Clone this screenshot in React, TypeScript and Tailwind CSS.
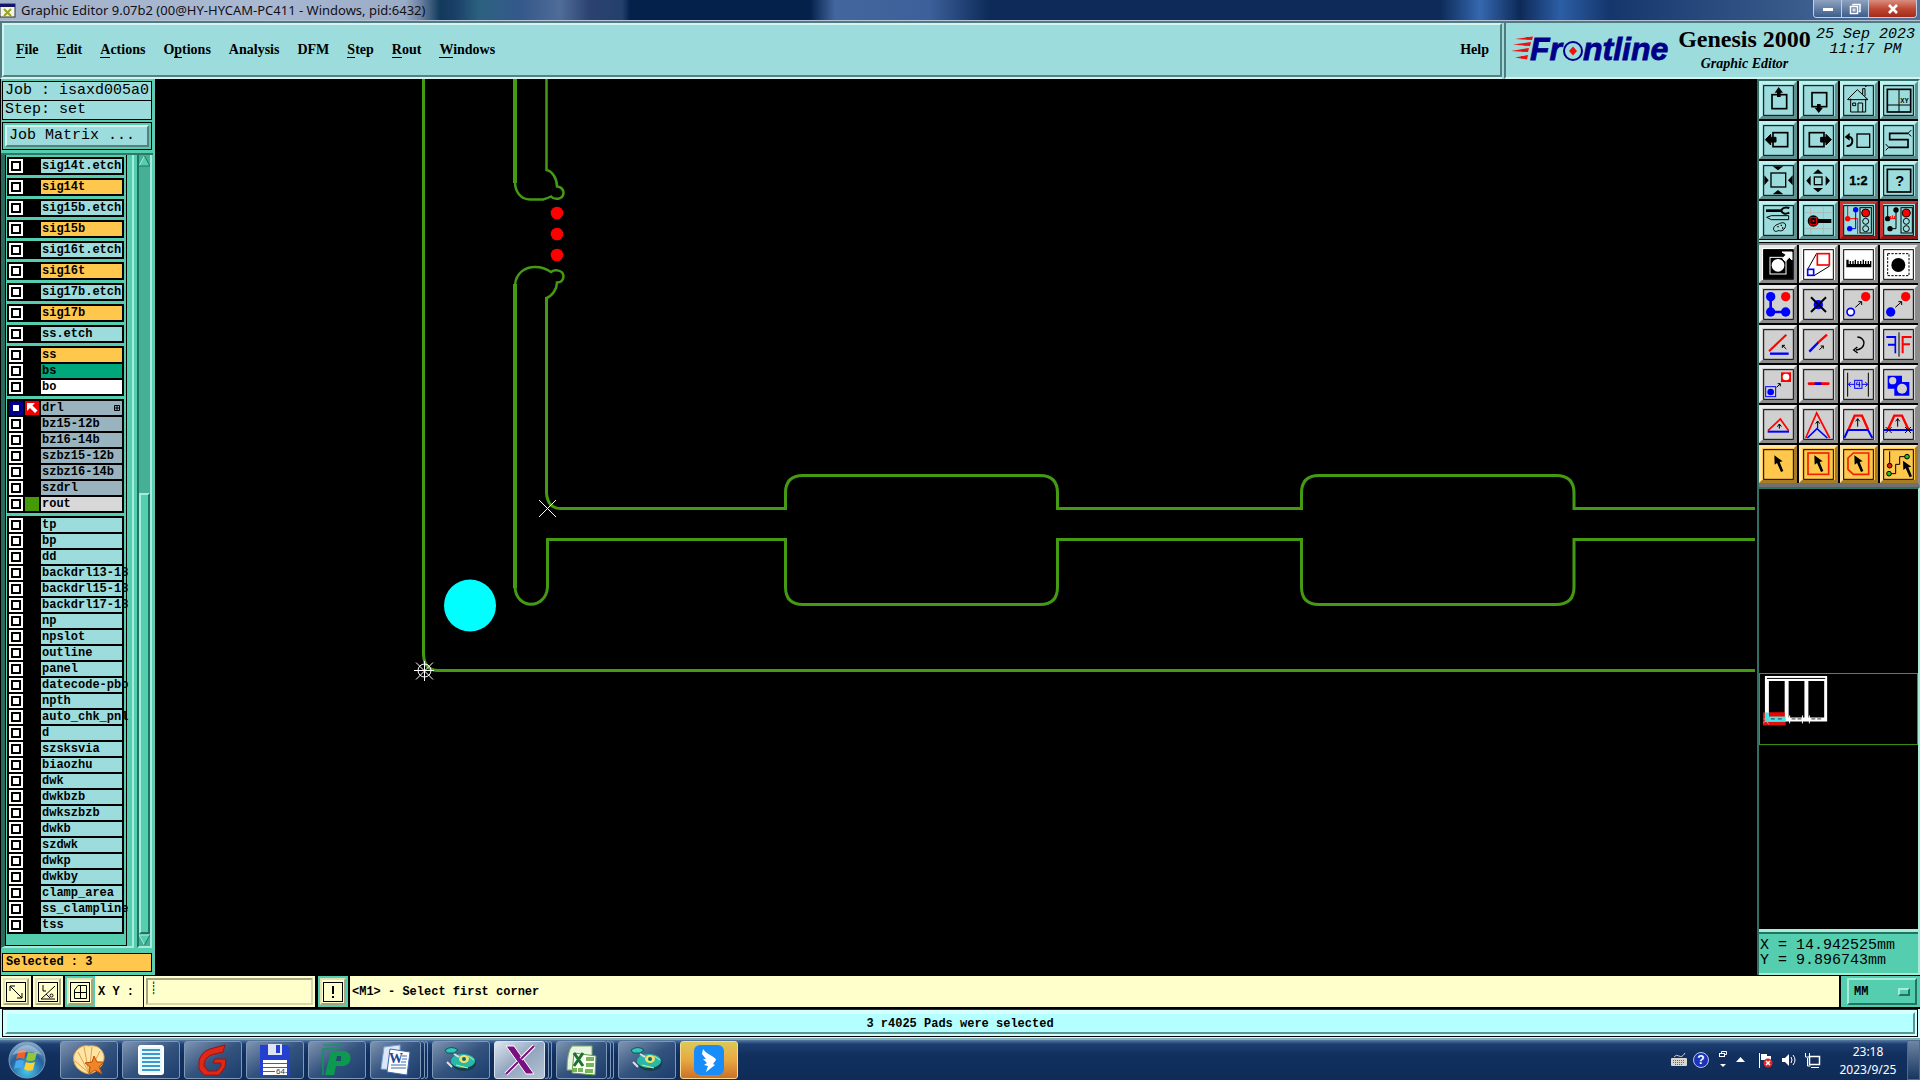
import React, { ReactNode } from "react";

const mono = "font-['Liberation_Mono',monospace] font-bold";
const serif = "font-['Liberation_Serif',serif] font-bold";
const raised = "border-2 border-t-[#d5f3f0] border-l-[#d5f3f0] border-r-[#568180] border-b-[#568180]";

/* ---------- Title bar ---------- */

function TitleBar() {
  return (
    <header className="flex h-[21px] shrink-0 items-center justify-between border-b border-[#b4c0d4] bg-[linear-gradient(90deg,#a3b2cb_0px,#aab9d2_260px,#9aabc6_405px,#6d83a4_420px,#123a5a_440px,#1a3f68_455px,#2c6280_480px,#34588a_520px,#506c98_560px,#2c4270_590px,#24406c_622px,#04214c_630px,#04214c_810px,#44669e_835px,#3c609a_930px,#0d2a58_990px,#0d2a58_1440px,#3568b0_1480px,#0d2a58_1520px,#2c5ea6_1560px,#14366c_1610px,#3a5c8c_1800px,#51719c_1900px)]">
      <div className="flex items-center gap-[5px]">
        <svg width="16" height="15" viewBox="0 0 16 15">
          <rect x="0" y="1" width="15" height="13" fill="#f4f4ee" stroke="#333" />
          <rect x="0" y="1" width="15" height="3" fill="#15156b" />
          <path d="M4 6l7 7M11 6l-7 7" stroke="#9aa51b" strokeWidth="2" />
        </svg>
        <h1 className="font-['Noto_Sans',sans-serif] text-[13px] leading-[20px] text-[#101018]">
          Graphic Editor 9.07b2 (00@HY-HYCAM-PC411 - Windows, pid:6432)
        </h1>
      </div>
      <div className="mr-[3px] flex h-[18px] self-start overflow-hidden rounded-b-[4px] border border-t-0 border-[#c3cfdf]">
        <button aria-label="Minimize" className="flex w-7 items-center justify-center border-r border-[#c3cfdf] bg-gradient-to-b from-[#8fa3bf] to-[#3d5d8c]">
          <svg width="12" height="12"><rect x="1" y="5" width="10" height="3" fill="#fff" /></svg>
        </button>
        <button aria-label="Restore" className="flex w-[27px] items-center justify-center border-r border-[#c3cfdf] bg-gradient-to-b from-[#8fa3bf] to-[#3d5d8c]">
          <svg width="12" height="12" fill="none" stroke="#fff" strokeWidth="1.5"><path d="M4 2.5V1.500h7v7H9.500" /><rect x="1.500" y="3.500" width="7" height="7" /><rect x="4" y="6" width="2" height="2" strokeWidth="1" /></svg>
        </button>
        <button aria-label="Close" className="flex w-[47px] items-center justify-center bg-gradient-to-b from-[#d88d80] via-[#c04a35] to-[#a42a18]">
          <svg width="12" height="12"><path d="M2 2l8 8M10 2l-8 8" stroke="#fff" strokeWidth="2.600" /></svg>
        </button>
      </div>
    </header>
  );
}

/* ---------- Menu and brand panel ---------- */

const menus: [string, number][] = [
  ["File", 0], ["Edit", 0], ["Actions", 0], ["Options", 1], ["Analysis", -1],
  ["DFM", -1], ["Step", 0], ["Rout", 0], ["Windows", 0],
];

function MenuLabel({ text, mark }: { text: string; mark: number }) {
  if (mark < 0) return <>{text}</>;
  return (
    <>
      {text.slice(0, mark)}
      <span className="border-b border-black">{text[mark]}</span>
      {text.slice(mark + 1)}
    </>
  );
}

function FrontlineLogo() {
  return (
    <svg width="162" height="44" viewBox="0 -8 162 44" aria-label="Frontline" className="overflow-visible">
      <g fill="#f01010">
        <path d="M4 4L22 1.500 21 5z M2 9.500L20 7 19 11z M0 16L18 13 17 17z M4 22.500L17 20 16 24.500z" />
        <rect x="15" y="2" width="6" height="2.500" /><rect x="13" y="8" width="6" height="2.500" />
        <rect x="11" y="14" width="6" height="2.500" /><rect x="10" y="21" width="6" height="2.500" />
      </g>
      <g fill="#000088" stroke="#000088" strokeWidth="0.800" fontFamily="Liberation Sans, sans-serif" fontWeight="bold" fontStyle="italic" fontSize="32">
        <text x="19" y="25">Fr</text>
        <text x="72" y="25">ntline</text>
      </g>
      <circle cx="62" cy="16" r="9" fill="#9cdcdc" stroke="#000088" strokeWidth="2" />
      <path d="M62 11.500l4 4.500-4 4.500-4-4.500z" fill="#f01010" />
    </svg>
  );
}

function TopBar() {
  return (
    <div className="flex h-[58px] shrink-0 border-t-2 border-t-[#4f7c80] bg-[#9cdcdc]">
      <nav className="flex flex-1 items-center justify-between border-b-2 border-[#d5f3f0] border-l-2 border-l-[#4f7c80]">
        <div className={`flex h-full w-full items-center justify-between ${raised} pr-[11px] pl-[12px]`}>
          <div className="flex gap-[18px]">
            {menus.map(([text, mark]) => (
              <button key={text} className={`${serif} text-[14px] leading-[18px] text-black`}>
                <MenuLabel text={text} mark={mark} />
              </button>
            ))}
          </div>
          <button className={`${serif} text-[14px] leading-[18px]`}>Help</button>
        </div>
      </nav>
      <section className="ml-[2px] flex w-[416px] justify-between border-b-2 border-l-2 border-b-[#d5f3f0] border-l-[#4f7c80] pl-[5px] pr-[5px]">
        <div className="pt-[4px]"><FrontlineLogo /></div>
        <div className={`${serif} flex flex-col items-center`}>
          <span className="text-[24px] leading-[32px] whitespace-nowrap">Genesis 2000</span>
          <span className="text-[14px] leading-[18px] italic">Graphic Editor</span>
        </div>
        <div className={`${mono} flex flex-col items-center pt-[4px] text-[15px] leading-[15px] font-normal whitespace-nowrap italic`}>
          <span>25 Sep 2023</span>
          <span>11:17 PM</span>
        </div>
      </section>
    </div>
  );
}

/* ---------- Layer list ---------- */

type Layer = { name: string; tone: string; kind?: "active" | "green" };
const cyan = "bg-[#9cdcdc]";
const amber = "bg-[#ffc84d]";
const slate = "bg-[#9ab4bf]";

const layerGroups: Layer[][] = [
  [{ name: "sig14t.etch", tone: cyan }],
  [{ name: "sig14t", tone: amber }],
  [{ name: "sig15b.etch", tone: cyan }],
  [{ name: "sig15b", tone: amber }],
  [{ name: "sig16t.etch", tone: cyan }],
  [{ name: "sig16t", tone: amber }],
  [{ name: "sig17b.etch", tone: cyan }],
  [{ name: "sig17b", tone: amber }],
  [{ name: "ss.etch", tone: cyan }],
  [
    { name: "ss", tone: amber },
    { name: "bs", tone: "bg-[#00a67c]" },
    { name: "bo", tone: "bg-white" },
  ],
  [
    { name: "drl", tone: slate, kind: "active" },
    { name: "bz15-12b", tone: slate },
    { name: "bz16-14b", tone: slate },
    { name: "szbz15-12b", tone: slate },
    { name: "szbz16-14b", tone: slate },
    { name: "szdrl", tone: slate },
    { name: "rout", tone: "bg-[#d8d8d8]", kind: "green" },
  ],
  [
    "tp", "bp", "dd", "backdrl13-18", "backdrl15-18", "backdrl17-18", "np", "npslot", "outline",
    "panel", "datecode-pbo", "npth", "auto_chk_pnl", "d", "szsksvia", "biaozhu", "dwk", "dwkbzb",
    "dwkszbzb", "dwkb", "szdwk", "dwkp", "dwkby", "clamp_area", "ss_clampline", "tss",
  ].map((name) => ({ name, tone: cyan })),
];

function LayerRow({ layer }: { layer: Layer }) {
  const active = layer.kind === "active";
  return (
    <li className="flex h-[14px] gap-[2px]">
      <label className="contents">
        <input
          type="checkbox"
          className={
            active
              ? "h-[14px] w-[14px] shrink-0 appearance-none border-[3px] border-[#00008c] bg-white outline-2 -outline-offset-4 outline-[#00008c]"
              : "h-[14px] w-[14px] shrink-0 appearance-none bg-white outline-2 -outline-offset-4 outline-black"
          }
        />
        <span className={`h-[14px] w-[14px] shrink-0 ${active ? "bg-[#f00000]" : layer.kind === "green" ? "bg-[#459a08]" : "bg-black"}`}>
          {active && (
            <svg width="14" height="14"><path d="M2 2h8l-2.500 2.500 5 5-2.500 2.500-5-5L2 10z" fill="#fff" /></svg>
          )}
        </span>
        <span className={`flex h-[14px] w-[81px] items-center justify-between ${layer.tone} pl-[1px]`}>
          <span className={`${mono} shrink-0 text-[12px] leading-[14px] whitespace-pre`}>{layer.name}</span>
          {active && (
            <svg className="mr-[2px] shrink-0" width="6" height="6" fill="none" stroke="#000"><path d="M.5.5h5v5h-5zM3 0v6M0 3h6" /></svg>
          )}
        </span>
      </label>
    </li>
  );
}

function Sidebar() {
  return (
    <aside className="flex w-[155px] shrink-0 flex-col border-r-2 border-l border-r-[#6fc4b4] border-l-black bg-[#55ceb0] pt-[2px]">
      <dl className={`${mono} mx-[1px] border border-black bg-[#9cdcdc] text-[15px] leading-[18px] font-normal`}>
        <div className="border-b border-black pl-[2px] whitespace-pre">Job : isaxd005a0</div>
        <div className="pl-[2px] whitespace-pre">Step: set</div>
      </dl>
      <div className="mx-[1px] mt-[2px] border border-black p-[2px]">
        <button className={`${mono} block w-full ${raised} bg-[#9cdcdc] pl-[2px] text-left text-[15px] leading-[18px] font-normal`}>Job Matrix ...</button>
      </div>
      <div className="mt-[3px] flex flex-1 justify-between border-t-2 border-[#2f7768] pr-[1px]">
        <div className="flex w-[133px] border-r-2 border-b-2 border-l-4 border-[#a6ecd9] border-l-[#2b6b5e]">
          <div className="flex w-[122px] flex-col border-x border-b border-black pt-[2px] pl-[1px]">
            {layerGroups.map((group, i) => (
              <ul key={i} className="mb-[3px] flex w-[117px] flex-col gap-[2px] bg-black p-[2px]">
                {group.map((layer) => (
                  <LayerRow key={layer.name} layer={layer} />
                ))}
              </ul>
            ))}
          </div>
        </div>
        <div className="flex w-[15px] flex-col border-2 border-t-0 border-r-[#a6ecd9] border-b-[#a6ecd9] border-l-[#217362] bg-[#45b096]">
          <svg width="11" height="12"><path d="M5.500 1L11 11H0z" fill="#55ceb0" /><path d="M5.500 1L0 11" stroke="#a6ecd9" /><path d="M5.500 1L11 11H0" fill="none" stroke="#217362" /></svg>
          <div className="flex-[326]" />
          <div className="flex-[436] border-t-2 border-r-2 border-b-2 border-l-2 border-[#a6ecd9] border-r-[#217362] border-b-[#217362] bg-[#55ceb0]" />
          <svg width="11" height="12"><path d="M0 1H11L5.500 11z" fill="#55ceb0" /><path d="M11 1H0L5.500 11" fill="none" stroke="#a6ecd9" /><path d="M5.500 11L11 1" stroke="#217362" /></svg>
        </div>
      </div>
      <div className={`${mono} mx-[1px] mt-[5px] mb-[3px] border border-black bg-[#ffc84d] pl-[3px] text-[12px] leading-[17px] whitespace-pre`}>Selected : 3</div>
    </aside>
  );
}

/* ---------- Board canvas ---------- */

function Canvas() {
  return (
    <main className="min-w-0 flex-1 bg-black pr-[2px]">
      <svg className="block h-full w-full" viewBox="155 79 1600 896" preserveAspectRatio="xMinYMin slice">
        <g fill="none" stroke="#459a14" strokeWidth="3">
          <path d="M423.500 79V654Q424 670.500 438 670.500H1757" />
          <path d="M515 79V183" strokeWidth="4" />
          <path d="M515 182C515 192 521 199.500 530 199.500H543Q548 198 551 196.500C554 200 563 200 563.500 193C563.500 189 561 187 557 186.500C557 178 552 171 546.500 170V79" strokeWidth="2.500" />
          <path d="M515 284V588" strokeWidth="4" />
          <path d="M515 285C516 272 526 267 535 267Q544 267 551 272C555 269 563 270 563.500 276C563.500 280 561 282.500 557 282.500C557 289 552 296 546.500 298" strokeWidth="2.500" />
          <path d="M546.500 297V493Q547.500 508.500 561 508.500H785.500V493Q785.500 475.500 803 475.500H1040Q1057.500 475.500 1057.500 493V508.500H1301.500V493Q1301.500 475.500 1319 475.500H1556Q1574 475.500 1574 493V508.500H1757" />
          <path d="M515 587C516 610 546 610 547.500 587V539.500H785.500V587Q785.500 604.500 803 604.500H1040Q1057.500 604.500 1057.500 587V539.500H1301.500V587Q1301.500 604.500 1319 604.500H1556Q1574 604.500 1574 587V539.500H1757" />
        </g>
        <g fill="#ff0000">
          <circle cx="557" cy="213" r="6.300" /><circle cx="557" cy="234" r="6.300" /><circle cx="557" cy="255" r="6.300" />
        </g>
        <circle cx="470" cy="605.500" r="26" fill="#00ffff" />
        <g fill="none" stroke="#fff">
          <path d="M539 500l17 17M556 500l-17 17" />
          <path d="M416 662.500l17 17M433 662.500l-17 17M414 670.500h20M424.500 661v20" />
          <circle cx="424.500" cy="670.500" r="6.500" />
        </g>
      </svg>
    </main>
  );
}

/* ---------- Tool palette ---------- */

type Tool = { label: string; art: ReactNode };

const cursor = (dx: number) => (
  <path transform={`translate(${dx} 0)`} d="M33 18L34 46 41 41 53 68 60 65 49 38 58 36z" fill="#000" stroke="none" />
);
const upArrow = (x: number, top: number, bottom: number) => (
  <path d={`M${x} ${bottom}V${top}M${x - 6} ${top + 8}L${x} ${top}L${x + 6} ${top + 8}`} strokeWidth="3" />
);
const diagArrow = <path d="M36 54L54 38M45 37H55V47" strokeWidth="3" />;

const navTools: Tool[] = [
  { label: "Pan up", art: <><rect x="26" y="28" width="44" height="42" strokeWidth="5" /><path d="M46 5L59 22H52V35H41V22H34z" fill="#000" stroke="none" /></> },
  { label: "Pan down", art: <><rect x="26" y="22" width="44" height="42" strokeWidth="5" /><path d="M46 83L59 67H52V56H41V67H34z" fill="#000" stroke="none" /></> },
  { label: "Home", art: <><path d="M12 43L42 13 74 43M22 40V80H67V40M14 43H74M58 26V10H65V32" /><path d="M28 53h9v8h-9zM44 80V53H58V80" /><path d="M65 4l6-3" /></> },
  { label: "Coordinates", art: <><rect x="12" y="12" width="70" height="68" strokeWidth="5" /><path d="M47 12V80M12 59H82" /><text x="51" y="54" fontSize="19" fill="#000" stroke="none">XY</text></> },
  { label: "Pan left", art: <><rect x="29" y="22" width="44" height="42" strokeWidth="5" /><path d="M6 43L22 27V36H38V50H22V59z" fill="#000" stroke="#000" /></> },
  { label: "Pan right", art: <><rect x="18" y="22" width="44" height="42" strokeWidth="5" /><path d="M84 43L68 27V36H52V50H68V59z" fill="#000" stroke="#000" /></> },
  { label: "Previous view", art: <><rect x="41" y="26" width="38" height="40" strokeWidth="4" /><path d="M10 62C32 64 32 32 14 34" strokeWidth="6" /><path d="M4 35L19 22V46z" fill="#000" stroke="none" /></> },
  { label: "Snake", art: <><path d="M74 24H19V43H74V66H16" strokeWidth="5" /><path d="M74 24L84 14M74 24L84 33M16 66L7 56M16 66L7 75" /></> },
  { label: "Zoom in", art: <><rect x="23" y="23" width="44" height="42" strokeWidth="4" /><path d="M28 3H60L44 15zM28 87H60L44 74zM3 30V60L16 45zM88 30V60L74 45z" fill="#000" stroke="none" /></> },
  { label: "Zoom out", art: <><rect x="33" y="35" width="23" height="23" strokeWidth="4" /><path d="M29 25H59L44 12zM29 68H59L44 81zM22 31V61L9 46zM67 31V61L80 46z" fill="#000" stroke="none" /></> },
  { label: "Scale", art: <text x="45" y="59" fontSize="38" textAnchor="middle" fill="#000" stroke="#000" strokeWidth="1">1:2</text> },
  { label: "Help", art: <><rect x="12" y="12" width="70" height="68" strokeWidth="5" /><text x="49" y="62" fontSize="44" textAnchor="middle" fill="#000" stroke="none">?</text></> },
  { label: "Setup", art: <><path d="M8 16H54" strokeWidth="8" /><path d="M78 8C66 4 56 8 54 16C56 24 66 28 78 22" strokeWidth="6" /><path d="M10 36L24 31H76V43H24z" strokeWidth="3" /><path d="M46 56C30 60 26 74 36 78C42 80 42 74 48 76C58 80 70 66 66 56C62 50 52 52 46 56z" strokeWidth="3" /><path d="M42 64h4M52 60h4M56 68h4" strokeWidth="4" /></> },
  { label: "Highlight", art: <><path d="M6 22H84M6 70H84M22 6V84M60 6V84" stroke="#b0b8b8" /><circle cx="30" cy="47" r="17" fill="#000" stroke="none" /><path d="M44 47H84" strokeWidth="12" /><rect x="20" y="37" width="20" height="20" stroke="#f00" strokeWidth="3" /><rect x="27" y="44" width="6" height="6" fill="#f00" stroke="none" /></> },
  { label: "Netlist", art: <><path d="M13 2V40H43V86" stroke="#f00" /><path d="M37 13V70H19" stroke="#00f" /><circle cx="37" cy="13" r="8" fill="#00f" stroke="none" /><circle cx="19" cy="70" r="8" fill="#00f" stroke="none" /><circle cx="13" cy="40" r="8" fill="#f00" stroke="none" /><rect x="50" y="7" width="34" height="76" /><circle cx="67" cy="23" r="12" fill="#f00" /><circle cx="67" cy="48" r="9" /><circle cx="67" cy="70" r="9" /></> },
  { label: "Checks", art: <><path d="M13 2V40M38 14V70H20" /><circle cx="38" cy="14" r="8" fill="#000" stroke="none" /><circle cx="13" cy="40" r="8" fill="#000" stroke="none" /><circle cx="20" cy="70" r="8" fill="#000" stroke="none" /><path d="M18 40H38M22 32V40M28 30V40M34 32V40" stroke="#f00" /><rect x="53" y="7" width="34" height="76" /><circle cx="69" cy="23" r="12" fill="#f00" /><circle cx="69" cy="48" r="9" /><circle cx="69" cy="70" r="9" /></> },
];

const editTools: Tool[] = [
  { label: "Reference", art: <><rect x="2" y="2" width="86" height="86" fill="#000" /><rect x="20" y="24" width="48" height="50" stroke="#fff" /><circle cx="44" cy="48" r="19" fill="#fff" stroke="none" /><path d="M56 8H86V32L78 24 66 36 58 28 68 16z" stroke="#fff" fill="#fff" /></> },
  { label: "Area zoom", art: <><path d="M14 58L40 12M32 79L79 50" /><rect x="42" y="13" width="36" height="34" stroke="#f00" strokeWidth="5" fill="#fff" /><rect x="13" y="60" width="18" height="18" stroke="#00f" strokeWidth="5" fill="#fff" /></> },
  { label: "Measure", art: <path d="M9 54H84V35H80V44H77V35H73V44H69V35H65V44H62V31H58V44H54V35H50V44H46V35H42V44H38V31H34V44H31V35H27V44H23V35H19V44H16V31H9z" fill="#000" stroke="none" /> },
  { label: "Pad select", art: <><rect x="13" y="13" width="64" height="66" strokeDasharray="7 4" /><circle cx="45" cy="47" r="21" fill="#000" stroke="none" /></> },
  { label: "Connect", art: <><path d="M22 22V68H67" stroke="#00f" strokeWidth="8" /><g fill="#00f" stroke="none"><circle cx="22" cy="22" r="14" /><circle cx="22" cy="68" r="14" /><circle cx="67" cy="68" r="14" /></g><circle cx="67" cy="22" r="14" fill="#f00" stroke="none" /></> },
  { label: "Delete", art: <><circle cx="45" cy="46" r="14" fill="#00f" stroke="none" /><path d="M23 24L68 68M68 24L23 68" strokeWidth="6" /></> },
  { label: "Copy", art: <><circle cx="22" cy="68" r="11" stroke="#00f" strokeWidth="5" fill="#fff" /><circle cx="67" cy="22" r="14" fill="#f00" stroke="none" />{diagArrow}</> },
  { label: "Move", art: <><circle cx="22" cy="68" r="14" fill="#00f" stroke="none" /><circle cx="67" cy="22" r="14" fill="#f00" stroke="none" />{diagArrow}</> },
  { label: "Rotate line", art: <><path d="M17 66L69 16" stroke="#f00" strokeWidth="6" /><path d="M20 73H76" stroke="#00f" strokeWidth="7" /><path d="M69 59L57 48M57 56V48H65" /></> },
  { label: "Extend line", art: <><path d="M18 67L46 38" stroke="#00f" strokeWidth="7" /><path d="M44 40L71 16" stroke="#f00" strokeWidth="7" /><path d="M48 61L60 50M52 50H60V58" /></> },
  { label: "Rotate", art: <><path d="M42 23C68 24 70 58 38 62" strokeWidth="4" /><path d="M42 53L31 62 43 71" strokeWidth="4" /></> },
  { label: "Mirror", art: <><path d="M9 23H38M14 46H38" stroke="#00f" strokeWidth="6" /><path d="M36 20V72" stroke="#00f" strokeWidth="5" /><path d="M47 9V82" /><path d="M58 72V23H85M58 45H80" stroke="#f00" strokeWidth="6" /></> },
  { label: "Resize", art: <><rect x="53" y="9" width="30" height="29" fill="#f00" stroke="none" /><circle cx="68" cy="23" r="10" fill="#fff" stroke="none" /><rect x="7" y="52" width="30" height="30" stroke="#00f" fill="#d0d0d0" /><circle cx="22" cy="68" r="10" fill="#00f" stroke="none" /><path d="M40 54L50 44M43 43H51V51" /></> },
  { label: "Break line", art: <><path d="M17 43H75" stroke="#f00" strokeWidth="8" strokeLinecap="round" /><path d="M34 43H54" stroke="#00f" strokeWidth="8" /></> },
  { label: "Spacing", art: <><path d="M13 10V82M75 10V82" /><path d="M15 45H33M56 45H73M22 38L15 45 22 52M66 38L73 45 66 52" stroke="#00f" /><rect x="34" y="33" width="22" height="24" stroke="#00f" /><path d="M42 37L39 46H51M48 37V53" stroke="#00f" /></> },
  { label: "Merge", art: <><path d="M13 19H56V38H78V79H33V58H13z" fill="#00f" stroke="none" /><circle cx="28" cy="34" r="11" fill="#d0d0d0" stroke="none" /><circle cx="56" cy="58" r="15" fill="#d0d0d0" stroke="none" /></> },
  { label: "Triangle", art: <><path d="M14 64L51 29 76 64" stroke="#f00" strokeWidth="5" /><path d="M13 67H77" stroke="#00f" strokeWidth="6" />{upArrow(48, 44, 58)}</> },
  { label: "Peak", art: <><path d="M7 86L40 11 79 86" stroke="#f00" strokeWidth="5" /><path d="M12 86L41 58 72 86" stroke="#00f" strokeWidth="5" />{upArrow(43, 35, 56)}</> },
  { label: "Trapezoid", art: <><path d="M16 60L34 19H56L74 60" stroke="#f00" strokeWidth="7" /><path d="M3 86L14 62H74L87 86" stroke="#00f" strokeWidth="6" />{upArrow(43, 28, 52)}</> },
  { label: "Trapezoid trim", art: <><path d="M14 60L33 19H56L75 60" stroke="#f00" strokeWidth="7" /><path d="M2 62H88" stroke="#00f" strokeWidth="6" /><path d="M7 53L25 71M25 53L7 71M65 53L83 71M83 53L65 71" />{upArrow(43, 28, 52)}</> },
  { label: "Select", art: cursor(0) },
  { label: "Select box", art: <><rect x="14" y="11" width="62" height="64" stroke="#f52000" strokeWidth="5" />{cursor(0)}</> },
  { label: "Select polygon", art: <><path d="M30 11H76V75H30L14 60V26z" stroke="#f52000" strokeWidth="5" />{cursor(0)}</> },
  { label: "Select net", art: <><path d="M19 6V49M17 73H37V45H49V22H71" /><circle cx="19" cy="49" r="7" fill="#e02000" /><circle cx="71" cy="22" r="7" fill="#20c020" /><circle cx="17" cy="73" r="7" fill="#20c020" /><g transform="translate(26 16)">{cursor(0)}</g></> },
];

const cyanBtn = "border-[#c4efee] border-r-[#5f8f90] border-b-[#5f8f90] bg-[#9cdcdc]";
const redBtn = "border-[#cc3434] border-r-[#8e1818] border-b-[#8e1818] bg-[#9cdcdc]";
const whiteBtn = "border-[#e8e8e8] border-r-[#8c8c8c] border-b-[#8c8c8c] bg-white";
const greyBtn = "border-[#ececec] border-r-[#8c8c8c] border-b-[#8c8c8c] bg-[#d0d0d0]";
const amberBtn = "border-[#ffe6a8] border-r-[#a87c24] border-b-[#a87c24] bg-[#ffc84d]";

function ToolButton({ tool, tone }: { tool: Tool; tone: string }) {
  return (
    <button aria-label={tool.label} className={`flex h-[38px] items-center justify-center border-[3px] ${tone}`}>
      <svg width="31" height="31" viewBox="-1 -1 93 93" className="shrink-0" fill="none" stroke="#000" strokeWidth="3" fontFamily="Liberation Sans, sans-serif" fontWeight="bold">
        <rect x="1" y="1" width="89" height="89" />
        {tool.art}
      </svg>
    </button>
  );
}

function Overview() {
  return (
    <div className="flex min-h-0 flex-1 flex-col justify-center overflow-hidden bg-black">
      <svg className="block w-full" height="73" viewBox="0 0 161 73" preserveAspectRatio="xMinYMin meet">
        <rect x="0.500" y="0.500" width="160" height="72" fill="none" stroke="#459a14" />
        <rect x="4" y="40" width="23" height="13" fill="#e01010" />
        <path fill="#fff" fillRule="evenodd" d="M6 3H69V49H6zM10 8V45H26V8zM30 8V45H46V8zM50 8V45H66V8z" />
        <path d="M8 5.500H67" stroke="#000" />
        <rect x="10" y="40" width="16" height="5" fill="#f00000" />
        <path d="M6 40h4v4h17v5H6z" fill="#40e8e8" />
        <path d="M12 46.500h4M19 46.500h4M33 46.500h4M39 46.500h4M53 46.500h4M59 46.500h4" stroke="#333" />
        <path d="M31 43v8M44 43v8M51 43v8" stroke="#fff" />
        <path d="M4 51l6-6M5 46l5 6" stroke="#aaa" />
      </svg>
    </div>
  );
}

function ToolColumn() {
  return (
    <aside className="flex w-[163px] shrink-0 flex-col border-l-2 border-l-[#2f6f66] bg-black">
      <div className="grid grid-cols-4 gap-[2px] border-t-2 border-r-2 border-b-2 border-[#2f6f66] border-r-[#c4efee] border-b-[#c4efee] bg-black pb-[1px]">
        {navTools.map((tool, i) => (
          <ToolButton key={tool.label} tool={tool} tone={i > 13 ? redBtn : cyanBtn} />
        ))}
      </div>
      <div className="mt-[1px] grid grid-cols-4 gap-[2px] border-t-2 border-r-2 border-b-4 border-[#8c8c8c] border-b-[#707070] bg-black">
        {editTools.map((tool, i) => (
          <ToolButton key={tool.label} tool={tool} tone={i < 4 ? whiteBtn : i < 20 ? greyBtn : amberBtn} />
        ))}
      </div>
      <div className="flex flex-1 border-t-2 border-r-2 border-[#2f6f66] border-r-[#a6ecd9]">
        <Overview />
      </div>
      <div className={`${mono} border-t-[3px] border-r-2 border-b-2 border-[#a6ecd9] bg-[#55ceb0]`}>
        <div className="border-t-2 border-[#217362] pt-[4px] pb-[5px] pl-[1px] text-[15px] leading-[15px] font-normal whitespace-pre">
          <div>X = 14.942525mm</div>
          <div>Y = 9.896743mm</div>
        </div>
      </div>
    </aside>
  );
}

/* ---------- Command line and status ---------- */

function SmallButton({ label, framed, children }: { label: string; framed?: boolean; children: ReactNode }) {
  return (
    <button
      aria-label={label}
      className={`flex w-[30px] shrink-0 items-center justify-center bg-[#ffffcc] ${framed ? "border-2 border-[#55ceb0]" : ""}`}
    >
      <span className="flex h-[27px] w-[26px] shrink-0 items-center justify-center border-2 border-[#e3e3b8] border-r-[#a5a584] border-b-[#a5a584]">
        <svg className="shrink-0" width="20" height="20" fill="none" stroke="#000"><rect x="0.500" y="0.500" width="19" height="19" />{children}</svg>
      </span>
    </button>
  );
}

function CommandBar() {
  return (
    <div className={`${mono} flex h-[34px] shrink-0 items-stretch gap-[2px] border-y border-black bg-black pb-[1px] pl-[1px] text-[12px]`}>
      <SmallButton label="Line mode"><path d="M4 4l12 12M4 9V4h5M16 11v5h-5" /></SmallButton>
      <SmallButton label="Angle mode"><path d="M3 17h14M3 17L17 4M5 3v6h3M8 12l4 4" /><circle cx="13.500" cy="13.500" r="1.500" /></SmallButton>
      <SmallButton label="Snap grid" framed><path d="M4.500 16.500V8L8 3.500h8.500v13zM10.500 3.500v13M4.500 10.500h12" /></SmallButton>
      <div className="-ml-[2px] flex flex-1 bg-[#ffffcc]">
        <label htmlFor="xy" className="w-[48px] shrink-0 pt-[9px] pl-[3px] leading-[14px] whitespace-pre">X Y :</label>
        <div className="w-[173px] shrink-0 border-x border-black p-[2px]">
          <input id="xy" className="h-full w-full border-2 border-t-[#a5a584] border-r-[#d8d8ae] border-b-[#d8d8ae] border-l-[#a5a584] bg-[#ffffcc] px-[2px] pb-[6px] outline-none" defaultValue="┊" />
        </div>
        <div className="flex border-x-2 border-black bg-black">
          <SmallButton label="Alert" framed><path d="M10 4v8M10 14v2" strokeWidth="2" /></SmallButton>
        </div>
        <p className="pt-[9px] pl-[2px] leading-[14px] whitespace-pre">{"<M1> - Select first corner"}</p>
      </div>
      <div className="flex w-[79px] shrink-0 bg-[#55ceb0] py-[2px] pr-[3px] pl-[6px]">
        <button className="flex flex-1 items-center justify-between border-2 border-[#a6ecd9] border-r-[#217362] border-b-[#217362] pr-[5px] pl-[5px]">
          MM
          <span className="h-[8px] w-[12px] border-2 border-t-[#a6ecd9] border-r-[#217362] border-b-[#217362] border-l-[#a6ecd9]" />
        </button>
      </div>
    </div>
  );
}

function StatusBar() {
  return (
    <div className="h-[31px] shrink-0 border-b-2 border-[#c8f8f8] border-b-[#7fb0b8] bg-[#d4ffff] px-[2px]">
      <div className="h-[28px] border border-black border-t-[#203030] p-[2px]">
        <p className={`${mono} h-full border-2 border-t-[#d8ffff] border-r-[#5a9494] border-b-[#5a9494] border-l-[#d8ffff] bg-[#b4ffff] text-center text-[12px] leading-[20px]`}>
          3 r4025 Pads were selected
        </p>
      </div>
    </div>
  );
}

/* ---------- Taskbar ---------- */

const diskIcon = (
  <svg width="32" height="34" viewBox="0 0 32 34">
    <path d="M1 2h27l3 3v28H1z" fill="#2340d0" /><rect x="9" y="1" width="14" height="11" fill="#dfe4f4" /><rect x="17" y="2" width="4" height="8" fill="#2340d0" />
    <rect x="4" y="17" width="24" height="15" fill="#fff" /><path d="M4 20.500h24M4 24.500h24M4 28.500h12" stroke="#c83030" />
    <text x="17" y="31" fontSize="8" fontFamily="Liberation Sans, sans-serif" fill="#333">64-</text>
  </svg>
);
const shellIcon = (
  <svg width="34" height="32" viewBox="0 0 34 32">
    <path d="M17 30C6 28 0 20 2 11C6 2 13 1 17 2C23 1 30 3 32 12C33 20 26 28 17 30z" fill="#ffe4a4" stroke="#e0a850" />
    <path d="M17 29L6 8M17 29L12 3M17 29L20 3M17 29L28 7M17 29L3 17" stroke="#e0a048" />
    <path d="M22 12l3 6 7 0-5 5 3 7-7-4-6 4 1-7-5-4 7-1z" fill="#f08428" stroke="#b8500c" />
  </svg>
);
const noteIcon = (
  <svg width="28" height="32" viewBox="0 0 28 32">
    <rect x="2" y="2" width="24" height="28" rx="2" fill="#e8f8ff" stroke="#fff" strokeWidth="2" />
    <path d="M5 6h18M5 10h18M5 14h18M5 18h18M5 22h18M5 26h18" stroke="#3a9acc" strokeWidth="2" />
  </svg>
);
const gIcon = (
  <svg width="32" height="34" viewBox="0 0 32 34">
    <path d="M28 2L26 9 14 12Q7 15 7 23L11 28H20L24 23V20H16L18 16H29L28 24L22 32H7L2 26V18Q4 9 13 6Z" fill="#e02818" stroke="#a01008" />
  </svg>
);
const pIcon = (
  <svg width="34" height="34" viewBox="0 0 34 34">
    <path d="M3 32V6H18" fill="none" stroke="#0a9858" strokeWidth="1.500" /><path d="M3 2h18v4" fill="none" stroke="#0a9858" />
    <path d="M5 32L11 8H24C33 9 33 22 23 23H16L14 32z" fill="#0c9a50" /><path d="M17 13h4v5h-5z" fill="#24496f" />
  </svg>
);
const wordIcon = (
  <svg width="32" height="32" viewBox="0 0 32 32">
    <path d="M4 3L20 1V26L1 25z" fill="#dce8f8" stroke="#7da6d8" /><path d="M10 5L30 8 27 31 7 28z" fill="#fff" stroke="#3a68b0" />
    <text x="9" y="19" fontSize="14" fontWeight="bold" fontFamily="Liberation Serif, serif" fill="#204a98">W</text>
    <path d="M22 12h5M22 15h5M11 21h15M11 24h15M21 18h5" stroke="#3a68b0" />
  </svg>
);
const genesisIcon = (
  <svg width="34" height="30" viewBox="0 0 34 30">
    <ellipse cx="20" cy="18" rx="12" ry="8" fill="#153f4c" /><ellipse cx="19" cy="16" rx="12" ry="7" fill="#28b8a8" />
    <ellipse cx="20" cy="14" rx="5" ry="4" fill="#f0e070" /><ellipse cx="20" cy="14" rx="2" ry="2" fill="#0a6868" />
    <path d="M1 5Q8 0 14 5L10 8 3 8z" fill="#30c8b8" stroke="#0b5858" /><path d="M3 17l5 5M10 9l5 3" stroke="#d8e0e8" strokeWidth="2" />
    <path d="M12 20l12 3M24 11l6 4" stroke="#d8f080" />
  </svg>
);
const xIcon = (
  <svg width="32" height="32" viewBox="0 0 32 32">
    <path d="M2 2H10L30 30H22z" fill="#7b1080" stroke="#fff" /><path d="M30 2L17 15M14 18L2 30" stroke="#fff" strokeWidth="4" /><path d="M30 2L17 15M14 18L2 30" stroke="#7b1080" strokeWidth="2" />
  </svg>
);
const excelIcon = (
  <svg width="32" height="32" viewBox="0 0 32 32">
    <path d="M6 2H26V26H1Q1 8 6 2z" fill="#e8f4e0" stroke="#78b060" /><path d="M8 9L30 12 29 31 6 29z" fill="#f8fff4" stroke="#60a048" />
    <path d="M20 13h8v4h-8zM20 19h8v4h-8zM19 25h8v4h-8zM12 24h5v4h-5zM6 24h5v4H6z" fill="#78b458" />
    <path d="M8 9l9 13M17 9L8 22" stroke="#1c7030" strokeWidth="3" />
  </svg>
);
const wingIcon = (
  <svg width="30" height="30" viewBox="0 0 30 30">
    <rect width="30" height="30" rx="6" fill="#188cf8" /><path d="M9 4C12 9 22 12 22 15L19 19 21 20 12 27 14 21 10 20 13 18 9 14 12 14 8 9z" fill="#fff" />
  </svg>
);

const tasks: { label: string; icon: ReactNode; tone?: "bright" | "amber"; stacked?: boolean }[] = [
  { label: "Shell", icon: shellIcon },
  { label: "Notes", icon: noteIcon },
  { label: "G", icon: gIcon },
  { label: "Disk", icon: diskIcon },
  { label: "P", icon: pIcon },
  { label: "Word", icon: wordIcon, stacked: true },
  { label: "Genesis", icon: genesisIcon },
  { label: "X server", icon: xIcon, tone: "bright", stacked: true },
  { label: "Excel", icon: excelIcon, stacked: true },
  { label: "Genesis toolkit", icon: genesisIcon },
  { label: "Messenger", icon: wingIcon, tone: "amber" },
];

function Taskbar() {
  return (
    <footer className="flex h-[40px] shrink-0 items-center justify-between bg-[linear-gradient(180deg,#5a7ba4_0px,#1c3f72_4px,#12305f_14px,#0f2c58_40px)]">
      <div className="flex h-full items-center">
        <button aria-label="Start" className="flex w-[60px] justify-center pr-[6px]">
          <svg width="38" height="38" viewBox="0 0 38 38">
            <defs>
              <radialGradient id="orb" cx="0.5" cy="0.8" r="0.8"><stop offset="0" stopColor="#48c8f0" /><stop offset="0.6" stopColor="#24609c" /><stop offset="1" stopColor="#8fb0cc" /></radialGradient>
            </defs>
            <circle cx="19" cy="19" r="18" fill="url(#orb)" stroke="#7f9cba" />
            <path d="M10 11Q14 8 18 10L16 18Q12 16 8 18z" fill="#f06028" /><path d="M20 11Q24 13 29 11L27 19Q22 21 18 19z" fill="#90c838" />
            <path d="M8 20Q12 18 16 20L14 27Q10 26 6 28z" fill="#48a8f0" /><path d="M18 21Q22 23 27 21L25 29Q20 31 16 28z" fill="#ffd030" />
            <path d="M4 14Q19 -6 34 14Q19 8 4 14z" fill="#fff" opacity="0.35" />
          </svg>
        </button>
        <div className="flex gap-[4px]">
          {tasks.map((t) => (
            <button key={t.label} aria-label={t.label} className="flex h-[38px] w-[58px]">
              <span
                className={`flex h-full flex-1 items-center justify-center rounded-[3px] border ${
                  t.tone === "amber"
                    ? "border-[#f4dc98] bg-gradient-to-b from-[#dcc858] via-[#e8a840] to-[#cc7028]"
                    : t.tone === "bright"
                      ? "border-[#dbe4ee] bg-gradient-to-br from-[#dfe6ee] via-[#93a6bf] to-[#b4c2d2]"
                      : "border-[#8098b8] bg-gradient-to-br from-[#7f94b0] via-[#34547f] to-[#1c3c6c]"
                }`}
              >
                {t.icon}
              </span>
              {t.stacked && (
                <>
                  <span className="w-[4px] rounded-r-[3px] border border-l-0 border-[#8098b8]" />
                  <span className="w-[3px] rounded-r-[3px] border border-l-0 border-[#8098b8]" />
                </>
              )}
            </button>
          ))}
        </div>
      </div>
      <div className="flex h-full items-center text-white">
        <div className="flex items-center gap-[6px] pr-[17px]">
          <svg width="16" height="16" viewBox="0 0 16 16"><path d="M3 5Q5 2 8 4T14 1" fill="none" stroke="#ccc" /><rect x="0" y="6" width="16" height="8" rx="1" fill="#d8d8d0" /><path d="M2 8.500h12M2 10.500h12M4 12.500h8" stroke="#666" strokeDasharray="1 1" /></svg>
          <svg width="16" height="16" viewBox="0 0 16 16"><circle cx="8" cy="8" r="7.500" fill="#1c34b8" stroke="#b8c4e8" /><text x="8" y="12" textAnchor="middle" fontSize="12" fontWeight="bold" fontFamily="Liberation Sans, sans-serif" fill="#fff">?</text></svg>
          <svg width="10" height="20" viewBox="0 0 10 20" className="ml-[3px]"><path d="M3.500 3V1.500h5v3H7" fill="none" stroke="#fff" /><rect x="1.500" y="3.500" width="5" height="3" fill="none" stroke="#fff" /><path d="M2 14h6l-3 3z" fill="#fff" /></svg>
          <svg width="9" height="6" className="ml-[2px]"><path d="M0 5L4.500 0 9 5z" fill="#fff" /></svg>
          <svg width="18" height="16" viewBox="0 0 18 16" className="ml-[5px]"><path d="M3.500 1v15" stroke="#fff" /><path d="M5 2h6v2h4v6H9V8H5z" fill="#fff" /><circle cx="12" cy="11" r="4.500" fill="#d82828" /><path d="M10 9l4 4M14 9l-4 4" stroke="#fff" strokeWidth="1.500" /></svg>
          <svg width="16" height="16" viewBox="0 0 16 16" className="ml-[1px]"><path d="M1 6h3l4-4v12L4 10H1z" fill="#fff" /><path d="M10 5q2 3 0 6M12 3q4 5 0 10" fill="none" stroke="#fff" /></svg>
          <svg width="16" height="16" viewBox="0 0 16 16" className="ml-[2px]"><rect x="4.500" y="4.500" width="10" height="8" fill="none" stroke="#fff" strokeWidth="1.500" /><path d="M6 15.500h8M2.500 6v8h3M.5 1v4h4V1" fill="none" stroke="#fff" /></svg>
        </div>
        <time className="flex w-[60px] flex-col items-center pt-[2px] font-['Noto_Sans',sans-serif] text-[12px] leading-[18px] whitespace-nowrap">
          <span>23:18</span>
          <span>2023/9/25</span>
        </time>
        <button aria-label="Show desktop" className="ml-[9px] h-full w-[13px] border border-[#50698c] bg-gradient-to-b from-[#6f86a4] to-[#17365f]" />
      </div>
    </footer>
  );
}

export default function App() {
  return (
    <div className="flex min-h-screen flex-col bg-black text-black">
      <TitleBar />
      <TopBar />
      <div className="flex flex-1">
        <Sidebar />
        <Canvas />
        <ToolColumn />
      </div>
      <CommandBar />
      <StatusBar />
      <Taskbar />
    </div>
  );
}
